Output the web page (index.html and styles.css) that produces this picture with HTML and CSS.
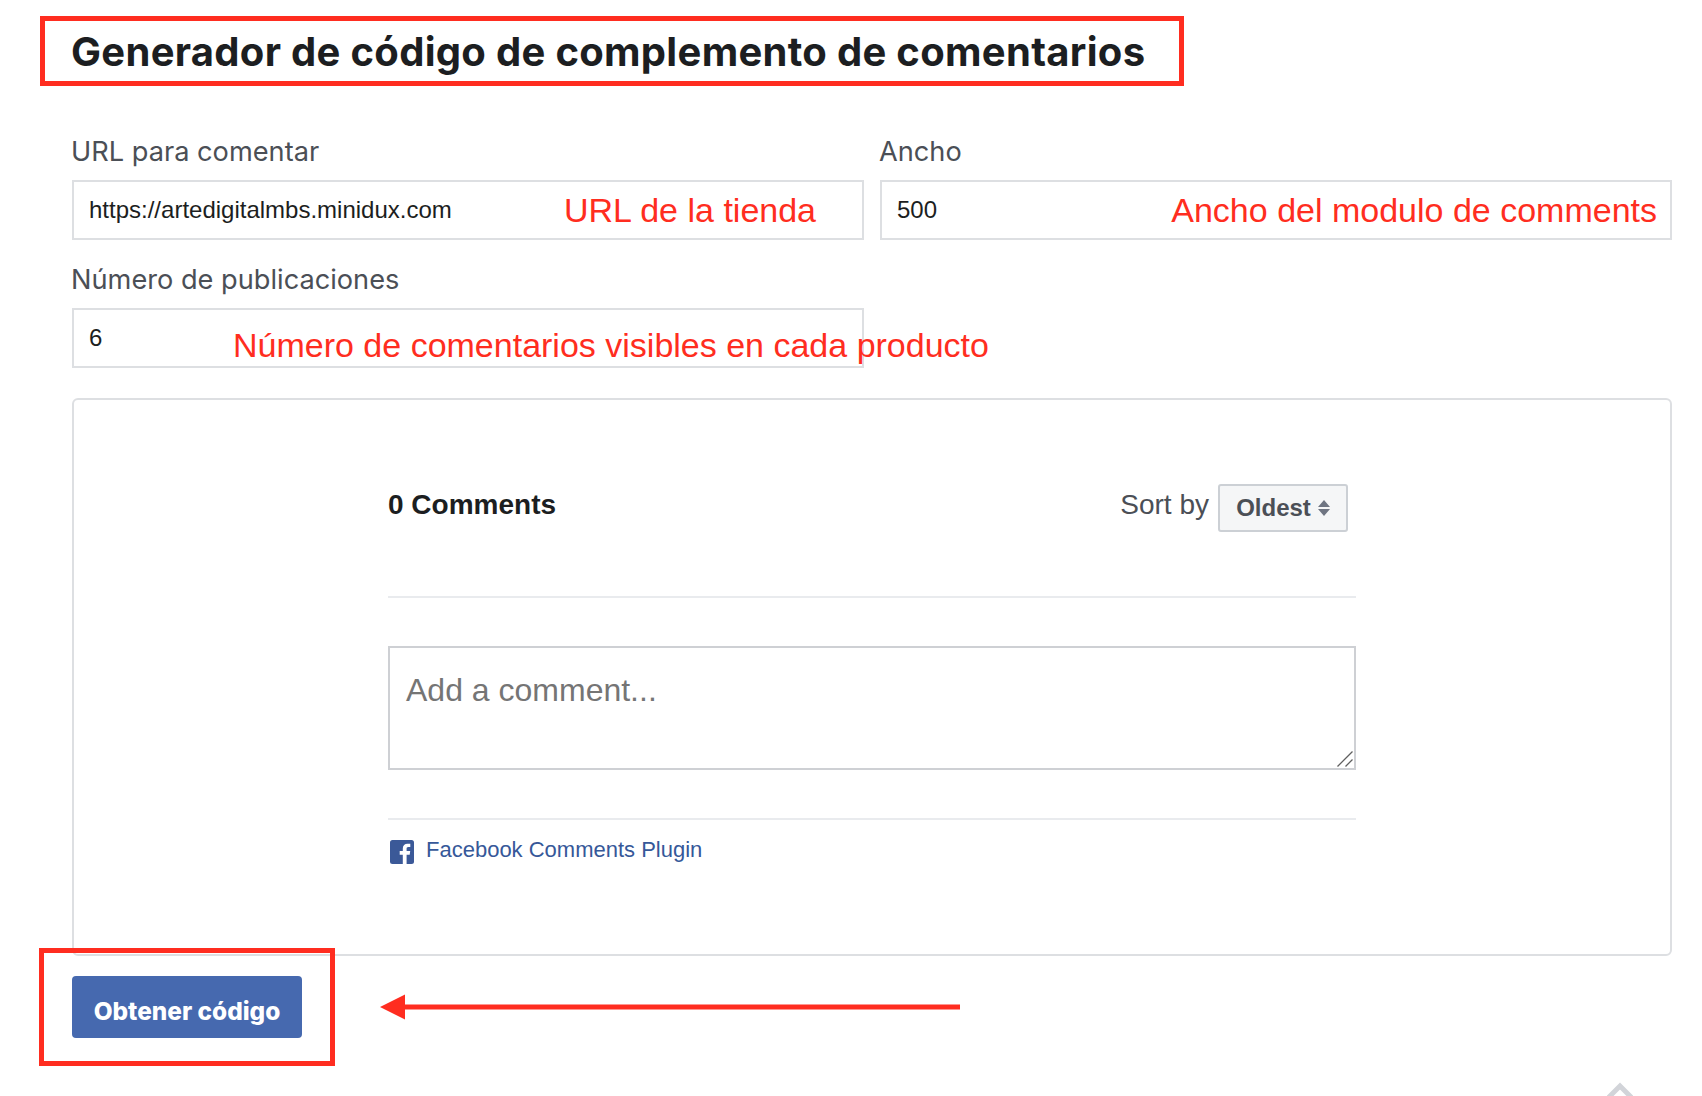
FILE: index.html
```html
<!DOCTYPE html>
<html lang="es">
<head>
  <meta charset="UTF-8">
  <title>Generador de código de complemento de comentarios</title>
  <link rel="stylesheet" href="styles.css">
</head>
<body>
  <main class="page">
    <header class="title-wrap">
      <h1>Generador de código de complemento de comentarios</h1>
      <div class="mark mark-title"></div>
    </header>

    <form class="fields">
      <div class="field">
        <label for="url">URL para comentar</label>
        <div class="field-box">
          <input id="url" type="text" value="https://artedigitalmbs.minidux.com">
          <span class="note note-url">URL de la tienda</span>
        </div>
      </div>
      <div class="field">
        <label for="ancho">Ancho</label>
        <div class="field-box">
          <input id="ancho" type="text" value="500">
          <span class="note note-ancho">Ancho del modulo de comments</span>
        </div>
      </div>
      <div class="field">
        <label for="num">Número de publicaciones</label>
        <div class="field-box">
          <input id="num" type="text" value="6">
          <span class="note note-num">Número de comentarios visibles en cada producto</span>
        </div>
      </div>
    </form>

    <section class="preview">
      <div class="plugin">
        <div class="plugin-head">
          <span class="count">0 Comments</span>
          <div class="sort">
            <span class="sort-label">Sort by</span>
            <div class="sort-select">
              Oldest
              <svg class="sort-arrows" width="12" height="16" viewBox="0 0 12 16">
                <path d="M6 0 L12 7 H0 Z M6 16 L12 9 H0 Z" fill="#6f7582"/>
              </svg>
            </div>
          </div>
        </div>
        <div class="comment-wrap">
          <textarea class="comment-box" placeholder="Add a comment..."></textarea>
          <svg class="grip" width="16" height="16" viewBox="0 0 16 16">
            <path d="M0.500 15.500 L15.500 0.500 M8.500 15.500 L15.500 8.500" fill="none" stroke="#5f5f5f" stroke-width="1.300"/>
          </svg>
        </div>
        <div class="plugin-foot">
          <svg class="fb-icon" width="24" height="24" viewBox="0 0 24 24">
            <rect width="24" height="24" rx="2.5" fill="#3b5998"/>
            <path d="M16.6 24 V14.7 H19.7 L20.2 11.1 H16.6 V8.8 C16.6 7.750 16.9 7 18.400 7 H20.300 V3.800 C20 3.750 18.850 3.650 17.500 3.650 C14.700 3.650 12.800 5.350 12.800 8.450 V11.100 H9.700 V14.700 H12.800 V24 Z" fill="#fff"/>
          </svg>
          <a class="fb-link" href="#">Facebook Comments Plugin</a>
        </div>
      </div>
    </section>

    <div class="actions">
      <button type="button" class="get-code">Obtener código</button>
      <svg class="arrow" width="580" height="26" viewBox="0 0 580 26">
        <path d="M0 13 L25 0.500 V10.500 H580 V15.500 H25 V25.500 Z" fill="#ff2d20"/>
      </svg>
      <div class="mark mark-button"></div>
    </div>
  </main>

  <svg class="to-top" width="26" height="14" viewBox="0 0 26 14">
    <path d="M1 16 L13 4 L25 16" fill="none" stroke="#d2d4d9" stroke-width="5"/>
  </svg>
</body>
</html>
```

FILE: styles.css
```css
html {
  overflow: hidden;
}

body {
  margin: 0;
  height: 1096px;
  position: relative;
  overflow: hidden;
  background: #fff;
  font-family: "Liberation Sans", Arial, sans-serif;
  color: #1c1e21;
}

.page {
  padding: 26px 30px 0 72px;
}

/* cajas rojas de anotacion */
.mark {
  position: absolute;
  box-sizing: border-box;
  border: 5px solid #ff2d20;
}

.title-wrap {
  position: relative;
  margin-bottom: 58px;
}

.title-wrap h1 {
  margin: 0 0 0 -1px;
  font-family: Inter, sans-serif;
  font-size: 40px;
  line-height: 52px;
  font-weight: 700;
  letter-spacing: 0.3px;
}

.mark-title {
  left: -32px;
  top: -10px;
  width: 1144px;
  height: 70px;
}

.fields {
  display: grid;
  grid-template-columns: 792px 792px;
  column-gap: 16px;
  row-gap: 24px;
}

.field label {
  display: block;
  margin: 0 0 12px -1px;
  font-family: Inter, sans-serif;
  font-size: 27.2px;
  line-height: 32px;
  color: #4b4f56;
}

.field-box {
  position: relative;
}

.field input {
  display: block;
  box-sizing: border-box;
  width: 100%;
  height: 60px;
  padding: 0 15px;
  border: 2px solid #dddfe2;
  outline: none;
  font-family: "Liberation Sans", Arial, sans-serif;
  font-size: 24px;
  color: #1c1e21;
}

.note {
  position: absolute;
  font-size: 34px;
  line-height: 40px;
  color: #ff2d20;
  white-space: nowrap;
}

.note-url {
  left: 492px;
  top: 10px;
}

.note-ancho {
  right: 15px;
  top: 10px;
}

.note-num {
  left: 161px;
  top: 17px;
}

.preview {
  box-sizing: border-box;
  height: 558px;
  margin-top: 30px;
  padding: 84px 314px 0;
  border: 2px solid #dddfe2;
  border-radius: 6px;
}

.plugin-head {
  display: flex;
  justify-content: space-between;
  align-items: center;
  padding-right: 8px;
  padding-bottom: 64px;
  border-bottom: 2px solid #e9ebee;
}

.count {
  margin-bottom: 6px;
  font-size: 28px;
  font-weight: 700;
}

.sort {
  display: flex;
  align-items: center;
  gap: 9px;
}

.sort-label {
  margin-bottom: 6px;
  font-size: 28px;
  color: #4b4f56;
}

.sort-select {
  display: flex;
  align-items: center;
  justify-content: center;
  gap: 7px;
  box-sizing: border-box;
  width: 130px;
  height: 48px;
  border: 2px solid #ccd0d5;
  border-radius: 3px;
  background: #f5f6f7;
  font-size: 24px;
  font-weight: 700;
  color: #4b4f56;
}

.comment-wrap {
  position: relative;
  margin-top: 48px;
}

.comment-box {
  display: block;
  box-sizing: border-box;
  width: 100%;
  height: 124px;
  padding: 24px 16px 0;
  border: 2px solid #ced0d4;
  border-radius: 0;
  outline: none;
  resize: none;
  font-family: "Liberation Sans", Arial, sans-serif;
  font-size: 32px;
}

.comment-box::placeholder {
  color: #757575;
}

.grip {
  position: absolute;
  right: 3px;
  bottom: 3px;
}

.plugin-foot {
  display: flex;
  align-items: center;
  gap: 13px;
  margin-top: 48px;
  padding-top: 17px;
  padding-left: 2px;
  border-top: 2px solid #e9ebee;
}

.fb-link {
  margin-left: -1px;
  margin-bottom: 3px;
  font-size: 22px;
  color: #365899;
  text-decoration: none;
}

.actions {
  position: relative;
  display: flex;
  align-items: center;
  gap: 78px;
  margin-top: 20px;
}

.get-code {
  width: 230px;
  height: 62px;
  padding: 8px 0 0;
  border: none;
  border-radius: 4px;
  background: #4669af;
  font-family: Inter, sans-serif;
  font-size: 24.4px;
  font-weight: 800;
  color: #fff;
}

.mark-button {
  left: -33px;
  top: -28px;
  width: 296px;
  height: 118px;
}

.to-top {
  position: absolute;
  left: 1607px;
  top: 1082px;
}
```
